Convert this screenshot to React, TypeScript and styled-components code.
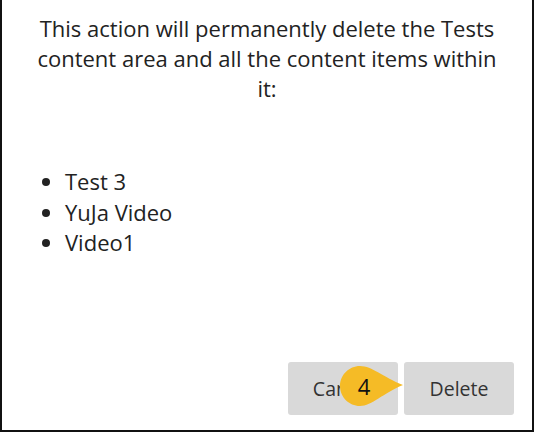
import styled, { createGlobalStyle } from 'styled-components';

const GlobalStyle = createGlobalStyle`
    html, body {
        margin: 0;
        padding: 0;
        background: #fff;
    }
    body {
        font-family: 'Open Sans', 'Liberation Sans', sans-serif;
    }
`;

const items = ['Test 3', 'YuJa Video', 'Video1'];

export default function App() {
    return (
        <>
            <GlobalStyle />
            <Dialog>
                <Message>
                    This action will permanently delete the Tests content area and all the content items within it:
                </Message>
                <ItemList>
                    {items.map((item) => (
                        <Item key={item}>{item}</Item>
                    ))}
                </ItemList>
                <Footer>
                    <Button>Cancel</Button>
                    <Button>Delete</Button>
                    <Callout>
                        <svg width="66" height="42" viewBox="0 0 66 42">
                            <path
                                d="M21 1 C 33 1 44 12 64 20 C 44 28 33 41 21 41 C 10 41 1 32 1 21 C 1 10 10 1 21 1 Z"
                                fill="#f5bb26"
                            />
                        </svg>
                        <CalloutNumber>4</CalloutNumber>
                    </Callout>
                </Footer>
            </Dialog>
        </>
    );
}

const Dialog = styled.div`
    box-sizing: border-box;
    width: 534px;
    height: 432px;
    border: 2px solid #111;
    border-top: none;
    display: flex;
    flex-direction: column;
    background: #fff;
`;

const Message = styled.p`
    margin: 0;
    padding: 13px 24px 0;
    font-size: 22px;
    line-height: 30px;
    color: #222;
    text-align: center;
`;

const ItemList = styled.ul`
    margin: 63px 0 0;
    padding-left: 63px;
    list-style: disc;
`;

const Item = styled.li`
    font-size: 22px;
    line-height: 30.5px;
    color: #222;
`;

const Footer = styled.div`
    position: relative;
    margin-top: auto;
    padding: 0 18px 15px 0;
    display: flex;
    justify-content: flex-end;
    gap: 6px;
`;

const Button = styled.button`
    width: 110px;
    height: 53px;
    border: none;
    border-radius: 3px;
    background: #d9d9d9;
    color: #333;
    font-family: 'Open Sans', 'Liberation Sans', sans-serif;
    font-size: 19.5px;
    cursor: pointer;
`;

const Callout = styled.div`
    position: absolute;
    left: 337px;
    top: 3px;
    width: 66px;
    height: 42px;
`;

const CalloutNumber = styled.span`
    position: absolute;
    left: 2px;
    top: 0;
    width: 46px;
    height: 42px;
    display: flex;
    align-items: center;
    justify-content: center;
    font-family: 'Open Sans', 'Liberation Sans', sans-serif;
    font-size: 22px;
    color: #111;
`;
